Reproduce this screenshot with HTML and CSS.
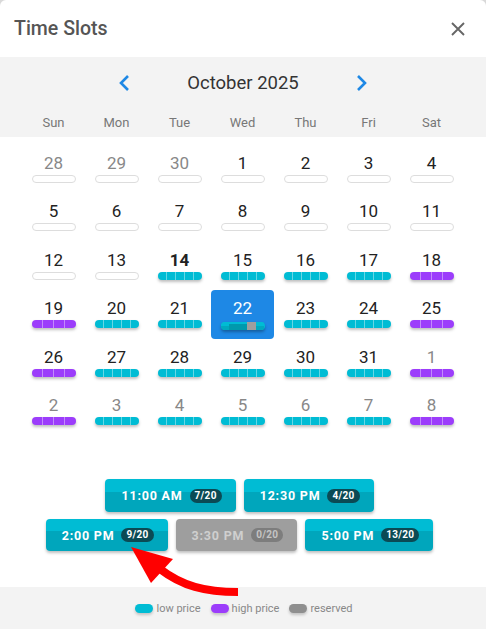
FILE: index.html
```html
<!DOCTYPE html>
<html lang="en">
<head>
  <meta charset="UTF-8" />
  <meta name="viewport" content="width=device-width, initial-scale=1.0" />
  <title>Time Slots</title>
  <link rel="stylesheet" href="styles.css">
</head>
<body>
  <div class="modal">
    <header class="modal-head">
      <h1>Time Slots</h1>
      <button class="close" aria-label="Close">
        <svg width="14" height="14" viewBox="0 0 14 14"><path d="M1 1 L13 13 M13 1 L1 13" stroke="#666" stroke-width="1.9" fill="none"/></svg>
      </button>
    </header>

    <div class="cal-head">
      <div class="month-nav">
        <button class="nav" aria-label="Previous month">
          <svg width="14" height="18" viewBox="0 0 14 18"><path d="M11 2 L4 9 L11 16" stroke="#1e88e5" stroke-width="2.6" fill="none"/></svg>
        </button>
        <span class="month">October 2025</span>
        <button class="nav" aria-label="Next month">
          <svg width="14" height="18" viewBox="0 0 14 18"><path d="M3 2 L10 9 L3 16" stroke="#1e88e5" stroke-width="2.6" fill="none"/></svg>
        </button>
      </div>
      <div class="weekdays">
        <span>Sun</span><span>Mon</span><span>Tue</span><span>Wed</span><span>Thu</span><span>Fri</span><span>Sat</span>
      </div>
    </div>

    <div class="days">
      <!-- week 1 -->
      <div class="day muted"><span class="num">28</span><span class="bar empty"></span></div>
      <div class="day muted"><span class="num">29</span><span class="bar empty"></span></div>
      <div class="day muted"><span class="num">30</span><span class="bar empty"></span></div>
      <div class="day"><span class="num">1</span><span class="bar empty"></span></div>
      <div class="day"><span class="num">2</span><span class="bar empty"></span></div>
      <div class="day"><span class="num">3</span><span class="bar empty"></span></div>
      <div class="day"><span class="num">4</span><span class="bar empty"></span></div>
      <!-- week 2 -->
      <div class="day"><span class="num">5</span><span class="bar empty"></span></div>
      <div class="day"><span class="num">6</span><span class="bar empty"></span></div>
      <div class="day"><span class="num">7</span><span class="bar empty"></span></div>
      <div class="day"><span class="num">8</span><span class="bar empty"></span></div>
      <div class="day"><span class="num">9</span><span class="bar empty"></span></div>
      <div class="day"><span class="num">10</span><span class="bar empty"></span></div>
      <div class="day"><span class="num">11</span><span class="bar empty"></span></div>
      <!-- week 3 -->
      <div class="day"><span class="num">12</span><span class="bar empty"></span></div>
      <div class="day"><span class="num">13</span><span class="bar empty"></span></div>
      <div class="day today"><span class="num">14</span><span class="bar low"><i></i><i></i><i></i><i></i><i></i></span></div>
      <div class="day"><span class="num">15</span><span class="bar low"><i></i><i></i><i></i><i></i><i></i></span></div>
      <div class="day"><span class="num">16</span><span class="bar low"><i></i><i></i><i></i><i></i><i></i></span></div>
      <div class="day"><span class="num">17</span><span class="bar low"><i></i><i></i><i></i><i></i><i></i></span></div>
      <div class="day"><span class="num">18</span><span class="bar high"><i></i><i></i><i></i><i></i></span></div>
      <!-- week 4 -->
      <div class="day"><span class="num">19</span><span class="bar high"><i></i><i></i><i></i><i></i></span></div>
      <div class="day"><span class="num">20</span><span class="bar low"><i></i><i></i><i></i><i></i><i></i></span></div>
      <div class="day"><span class="num">21</span><span class="bar low"><i></i><i></i><i></i><i></i><i></i></span></div>
      <div class="day selected"><span class="num">22</span><span class="bar picked"><i></i><i class="dark"></i><i class="dark"></i><i class="taken"></i><i></i></span></div>
      <div class="day"><span class="num">23</span><span class="bar low"><i></i><i></i><i></i><i></i><i></i></span></div>
      <div class="day"><span class="num">24</span><span class="bar low"><i></i><i></i><i></i><i></i><i></i></span></div>
      <div class="day"><span class="num">25</span><span class="bar high"><i></i><i></i><i></i><i></i></span></div>
      <!-- week 5 -->
      <div class="day"><span class="num">26</span><span class="bar high"><i></i><i></i><i></i><i></i></span></div>
      <div class="day"><span class="num">27</span><span class="bar low"><i></i><i></i><i></i><i></i><i></i></span></div>
      <div class="day"><span class="num">28</span><span class="bar low"><i></i><i></i><i></i><i></i><i></i></span></div>
      <div class="day"><span class="num">29</span><span class="bar low"><i></i><i></i><i></i><i></i><i></i></span></div>
      <div class="day"><span class="num">30</span><span class="bar low"><i></i><i></i><i></i><i></i><i></i></span></div>
      <div class="day"><span class="num">31</span><span class="bar low"><i></i><i></i><i></i><i></i><i></i></span></div>
      <div class="day muted"><span class="num">1</span><span class="bar high"><i></i><i></i><i></i><i></i></span></div>
      <!-- week 6 -->
      <div class="day muted"><span class="num">2</span><span class="bar high"><i></i><i></i><i></i><i></i></span></div>
      <div class="day muted"><span class="num">3</span><span class="bar low"><i></i><i></i><i></i><i></i><i></i></span></div>
      <div class="day muted"><span class="num">4</span><span class="bar low"><i></i><i></i><i></i><i></i><i></i></span></div>
      <div class="day muted"><span class="num">5</span><span class="bar low"><i></i><i></i><i></i><i></i><i></i></span></div>
      <div class="day muted"><span class="num">6</span><span class="bar low"><i></i><i></i><i></i><i></i><i></i></span></div>
      <div class="day muted"><span class="num">7</span><span class="bar low"><i></i><i></i><i></i><i></i><i></i></span></div>
      <div class="day muted"><span class="num">8</span><span class="bar high"><i></i><i></i><i></i><i></i></span></div>
    </div>

    <div class="slots">
      <div class="slot-row">
        <button class="slot">11:00 AM <span class="count">7/20</span></button>
        <button class="slot">12:30 PM <span class="count">4/20</span></button>
      </div>
      <div class="slot-row">
        <button class="slot">2:00 PM <span class="count">9/20</span></button>
        <button class="slot reserved">3:30 PM <span class="count">0/20</span></button>
        <button class="slot">5:00 PM <span class="count">13/20</span></button>
      </div>
    </div>

    <footer class="legend">
      <span class="key"><i class="pill low"></i>low price</span>
      <span class="key"><i class="pill high"></i>high price</span>
      <span class="key"><i class="pill taken"></i>reserved</span>
    </footer>

    <!-- annotation pointing at the chosen slot -->
    <svg class="arrow" width="486" height="629" viewBox="0 0 486 629">
      <path d="M238 592 C 205 592, 182 586, 160 569" stroke="#f00" stroke-width="8" fill="none"/>
      <polygon points="131,547 151,583 173,559" fill="#f00"/>
    </svg>
  </div>
</body>
</html>
```

FILE: styles.css
```css
html {
  background: #d9d9d9;
}

body {
  margin: 0;
  font-family: Roboto, "Liberation Sans", sans-serif;
  color: #222;
}

button {
  font-family: inherit;
  border: none;
  background: none;
  padding: 0;
  cursor: pointer;
}

.modal {
  position: relative;
  width: 486px;
  height: 629px;
  background: #fff;
  border-radius: 6px 6px 0 0;
  overflow: hidden;
  display: flex;
  flex-direction: column;
}

/* header */
.modal-head {
  height: 57px;
  display: flex;
  align-items: center;
  justify-content: space-between;
  padding: 0 21px 0 14px;
  box-sizing: border-box;
}

.modal-head h1 {
  margin: 0;
  font-size: 19.5px;
  font-weight: 500;
  color: #555;
}

.close {
  width: 14px;
  height: 14px;
  display: flex;
  margin-top: 1px;
}

/* month + weekdays */
.cal-head {
  background: #f3f3f3;
}

.month-nav {
  height: 52px;
  display: flex;
  align-items: center;
  justify-content: center;
}

.nav {
  width: 30px;
  display: flex;
  justify-content: center;
}

.month {
  width: 208px;
  text-align: center;
  font-size: 18.5px;
  color: #333;
}

.weekdays,
.days {
  display: grid;
  grid-template-columns: repeat(7, 63px);
  justify-content: center;
  margin-left: -1px;
}

.weekdays {
  height: 28px;
  padding-top: 6px;
  box-sizing: border-box;
  align-items: start;
}

.weekdays span {
  text-align: center;
  font-size: 13px;
  color: #777;
}

/* day grid */
.days {
  padding-top: 8px;
  grid-auto-rows: 48.4px;
}

.day {
  display: flex;
  flex-direction: column;
  align-items: center;
  padding-top: 8px;
  box-sizing: border-box;
  border-radius: 4px;
}

.num {
  font-size: 17px;
  line-height: 20px;
}

.day.muted .num {
  color: #888;
}

.day.today .num {
  font-weight: 700;
}

.day.selected {
  background: #1e88e5;
}

.day.selected .num {
  color: #fff;
}

.bar {
  display: flex;
  width: 44px;
  height: 8px;
  margin-top: 2px;
  border-radius: 4px;
  overflow: hidden;
  box-sizing: border-box;
  box-shadow: 0 2px 3px rgba(0, 0, 0, 0.25);
}

.bar i {
  flex: 1;
}

.bar i + i {
  border-left: 1px solid rgba(255, 255, 255, 0.4);
}

.bar.empty {
  background: #fff;
  border: 1px solid #ddd;
  box-shadow: none;
}

.bar.low {
  background: #00bcd4;
}

.bar.high {
  background: #9c3dfb;
}

.bar.picked {
  margin-top: 4px;
  background: #00bcd4;
  box-shadow: 0 2px 3px rgba(0, 0, 0, 0.3);
}

.bar.picked i {
  border-left: none;
  background: linear-gradient(#00bcd4 45%, #00a9bf 45%);
}

.bar.picked i.dark {
  background: linear-gradient(#00bcd4 30%, #0099ad 30%);
}

.bar.picked i.taken {
  background: #9e9e9e;
}

/* time slots */
.slots {
  margin-top: 44px;
  padding-right: 7px;
  display: flex;
  flex-direction: column;
  gap: 7px;
}

.slot-row {
  display: flex;
  justify-content: center;
  gap: 8px;
}

.slot {
  height: 33px;
  padding: 0 14px 0 16px;
  display: flex;
  align-items: center;
  border-radius: 4px;
  background: linear-gradient(#00bcd4 38%, #00a6bc 38%);
  box-shadow: 0 2px 3px rgba(0, 0, 0, 0.25);
  color: #fff;
  font-size: 12.5px;
  font-weight: 700;
  letter-spacing: 0.8px;
}

.slot-row + .slot-row .slot {
  height: 32px;
}

.count {
  margin-left: 7px;
  padding: 0 5px;
  height: 14px;
  line-height: 14px;
  border-radius: 7px;
  background: #0b4a54;
  font-size: 10px;
  letter-spacing: 0.3px;
}

.slot.reserved {
  background: #9e9e9e;
  color: #cfcfcf;
}

.slot.reserved .count {
  background: #7d7d7d;
  color: #c4c4c4;
}

/* legend */
.legend {
  margin-top: auto;
  height: 42px;
  background: #f3f3f3;
  display: flex;
  align-items: center;
  justify-content: center;
  gap: 10px;
  padding-left: 2px;
  font-size: 11px;
  color: #888;
}

.key {
  display: flex;
  align-items: center;
  gap: 3px;
}

.pill {
  width: 18px;
  height: 9px;
  border-radius: 5px;
  box-shadow: 0 2px 3px rgba(0, 0, 0, 0.2);
}

.pill.low { background: #00bcd4; }
.pill.high { background: #9c3dfb; }
.pill.taken { background: #8f8f8f; }

.arrow {
  position: absolute;
  left: 0;
  top: 0;
  pointer-events: none;
}
```
